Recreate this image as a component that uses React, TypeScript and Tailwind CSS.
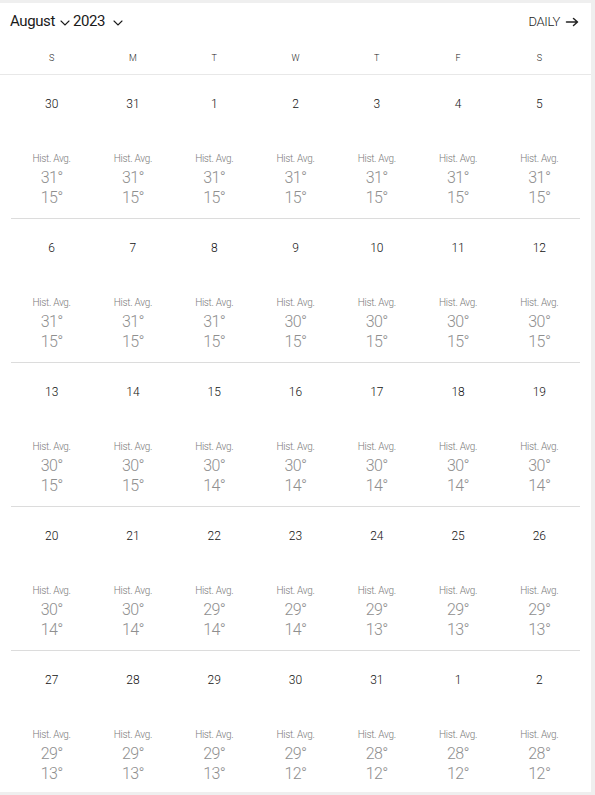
const DOW = ["S", "M", "T", "W", "T", "F", "S"];

type Day = { d: number; hi: number; lo: number };

const WEEKS: Day[][] = [
  [30, 31, 1, 2, 3, 4, 5].map((d) => ({ d, hi: 31, lo: 15 })),
  [6, 7, 8, 9, 10, 11, 12].map((d, i) => ({ d, hi: [31, 31, 31, 30, 30, 30, 30][i], lo: 15 })),
  [13, 14, 15, 16, 17, 18, 19].map((d, i) => ({ d, hi: 30, lo: [15, 15, 14, 14, 14, 14, 14][i] })),
  [20, 21, 22, 23, 24, 25, 26].map((d, i) => ({
    d,
    hi: [30, 30, 29, 29, 29, 29, 29][i],
    lo: [14, 14, 14, 14, 13, 13, 13][i],
  })),
  [27, 28, 29, 30, 31, 1, 2].map((d, i) => ({
    d,
    hi: [29, 29, 29, 29, 28, 28, 28][i],
    lo: [13, 13, 13, 12, 12, 12, 12][i],
  })),
];

function Chevron() {
  return (
    <svg viewBox="0 0 10 6" width="10" height="6" aria-hidden className="mt-[2px]">
      <path d="M1 1l4 4 4-4" fill="none" stroke="currentColor" strokeWidth="1.1" strokeLinecap="round" />
    </svg>
  );
}

function DayCell({ day }: { day: Day }) {
  return (
    <div className="flex flex-col items-center">
      <div className="mt-[21px] h-[16px] text-[12px] font-light leading-[16px] text-[#111]">{day.d}</div>
      <div className="mt-[40px] text-[10px] font-light leading-[14px] tracking-[-0.3px] text-[#7a7a7a]">Hist. Avg.</div>
      <div className="mt-[2px] text-[16px] font-light leading-[20px] tracking-[-0.6px] text-[#8f8f8f]">{day.hi}°</div>
      <div className="text-[16px] font-light leading-[20px] tracking-[-0.6px] text-[#8f8f8f]">{day.lo}°</div>
    </div>
  );
}

export default function App() {
  return (
    <div className="min-h-[795px] bg-[#efefef] pt-[3px]" style={{ fontFamily: "Roboto, 'Liberation Sans', sans-serif" }}>
      <div className="h-[789px] w-[591px] overflow-hidden bg-white">
        <div className="flex h-[36px] items-center justify-between px-[10px] pt-[1px] text-[#1a1a1a]">
          <div className="flex items-center gap-[5px] text-[15px] tracking-[-0.4px]">
            <span>August</span>
            <Chevron />
            <span className="-ml-[2px]">2023</span>
            <span className="ml-[3px] flex">
              <Chevron />
            </span>
          </div>
          <div className="flex items-center gap-[5px] pr-[1px] text-[13px] font-light tracking-[-0.3px] text-[#222]">
            <span>DAILY</span>
            <svg viewBox="0 0 14 10" width="15" height="10" aria-hidden>
              <path d="M1 5h11M8 1.5L12 5 8 8.5" fill="none" stroke="currentColor" strokeWidth="1.5" strokeLinecap="round" strokeLinejoin="round" />
            </svg>
          </div>
        </div>
        <div className="grid h-[35px] grid-cols-7 items-center px-[11px] pt-[4px]">
          {DOW.map((d, i) => (
            <div key={i} className="text-center text-[9px] font-light text-[#222]">
              {d}
            </div>
          ))}
        </div>
        <div className="h-px bg-[#e8e8e8]" />
        {WEEKS.map((week, wi) => (
          <div key={wi} className="px-[11px]">
            {wi > 0 && <div className="h-px bg-[#dcdcdc]" />}
            <div className="grid h-[143px] grid-cols-7">
              {week.map((day, di) => (
                <DayCell key={di} day={day} />
              ))}
            </div>
          </div>
        ))}
      </div>
    </div>
  );
}
